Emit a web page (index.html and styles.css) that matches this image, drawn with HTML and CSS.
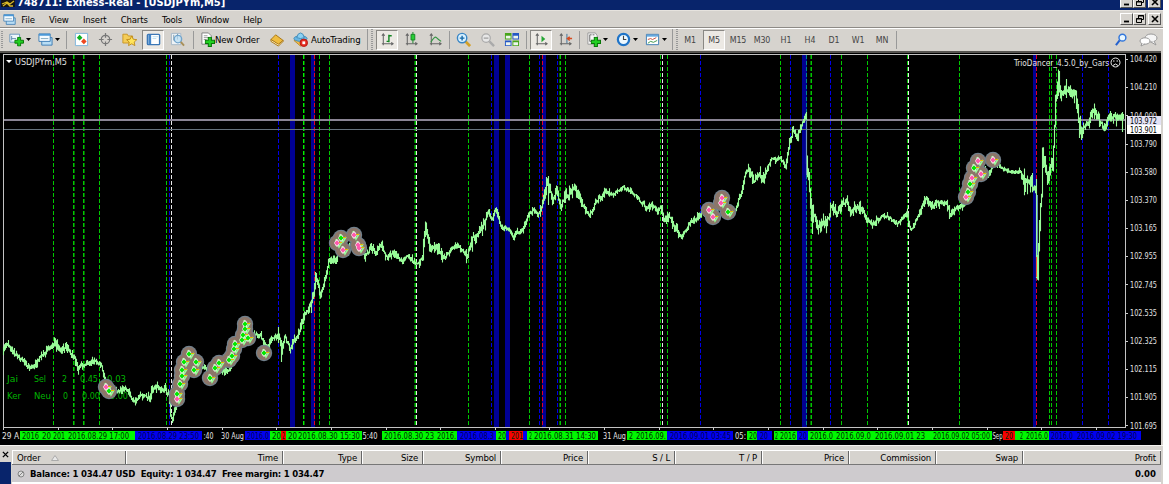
FILE: index.html
```html
<!DOCTYPE html>
<html lang="en">
<head>
<meta charset="utf-8">
<title>Trading terminal</title>
<link rel="stylesheet" href="styles.css">
</head>
<body>
<svg class="defs" width="0" height="0">
  <symbol id="arrow" viewBox="0 0 5 3"><path d="M0 0h5L2.500 3z" fill="#000"/></symbol>
  <symbol id="plus" viewBox="0 0 10 10"><path d="M3.500 .5h3v3h3v3h-3v3h-3v-3h-3v-3h3z" fill="#22d022" stroke="#087808"/></symbol>
  <symbol id="newchart" viewBox="0 0 17 16"><path d="M1 2h11v9H1z" fill="#eef6fb" stroke="#6090b8"/><path d="M3 4v5M3 7h5" stroke="#5585aa" fill="none"/><use href="#plus" x="6" y="5" width="11" height="11"/></symbol>
  <symbol id="profiles" viewBox="0 0 16 16"><path d="M4 6h11v8H4z" fill="#b9ddf4" stroke="#3c7cb4"/><path d="M1 2h12v8H1z" fill="#f4fbff" stroke="#3c7cb4"/><path d="M1 3h12" stroke="#4a98d8" stroke-width="2"/><path d="M3 7h8" stroke="#80a8c0"/></symbol>
  <symbol id="market" viewBox="0 0 16 16"><path d="M1.500 1.500h13v13h-13z" fill="#fff" stroke="#7cb4dc"/><path d="M6 3l3 3-3 3-3-3z" fill="#10b020"/><path d="M10.500 7l3 3-3 3-3-3z" fill="#ee4820"/></symbol>
  <symbol id="cross" viewBox="0 0 16 16"><circle cx="8" cy="8" r="4.500" fill="none" stroke="#777" stroke-width="1.300"/><path d="M8 1v5M8 10v5M1 8h5M10 8h5" stroke="#777" stroke-width="1.300"/></symbol>
  <symbol id="favorites" viewBox="0 0 17 16"><path d="M1 2h5l1 2h5v8H1z" fill="#f4cd58" stroke="#c79220"/><path d="M11 4l1.800 3.700 4 .5-3 2.700.8 4-3.600-2-3.600 2 .8-4-3-2.700 4-.5z" fill="#ffe45a" stroke="#bd8718"/></symbol>
  <symbol id="panel" viewBox="0 0 16 16"><rect x="1.500" y="2.500" width="13" height="11" rx="1" fill="#fff" stroke="#3d78b6" stroke-width="1.500"/><path d="M4 3v10" stroke="#4385c8" stroke-width="3"/><path d="M7 5h6M7 7h4" stroke="#b8dcef"/></symbol>
  <symbol id="tester" viewBox="0 0 16 16"><path d="M1.500 1.500h10v12h-10z" fill="#eef3f6" stroke="#a5b8c8"/><path d="M4 3v6M8 2v6" stroke="#8099a8"/><circle cx="8.500" cy="7.500" r="4" fill="#b9ddf4" fill-opacity=".7" stroke="#70a4cc" stroke-width="1.300"/><path d="M11.500 10.500l3.500 4" stroke="#a88f58" stroke-width="2"/></symbol>
  <symbol id="neworder" viewBox="0 0 16 16"><path d="M2 1h7l3 3v9H2z" fill="#fff" stroke="#808080"/><path d="M4 4h4M4 6h6M4 8h3" stroke="#999"/><use href="#plus" x="5" y="5" width="11" height="11"/></symbol>
  <symbol id="book" viewBox="0 0 16 16"><path d="M1 8l5-5 8 6-5 5z" fill="#efbd40" stroke="#a87412"/><path d="M1 8v2l8 5 5-5V9l-5 4z" fill="#fff2c0" stroke="#a87412"/></symbol>
  <symbol id="auto" viewBox="0 0 16 16"><path d="M3 8l-2 1 7 6 6-5z" fill="#efbf47" stroke="#b88930"/><ellipse cx="8" cy="7" rx="7" ry="3" fill="#6bb8e4" stroke="#428bb8"/><path d="M4 6Q5 1 8 1t4 5Q8 8 4 6" fill="#8bd0f2" stroke="#428bb8"/><circle cx="11.500" cy="11.500" r="4" fill="#e52b20" stroke="#b71610"/><path d="M10 10h3v3h-3z" fill="#fff"/></symbol>
  <symbol id="axes" viewBox="0 0 16 16"><path d="M3.500 2v12M2 12.500h12M2 4l1.500-2L5 4M12 11l2 1.500-2 1.500" fill="none" stroke="#666" stroke-width="1.100"/></symbol>
  <symbol id="bars" viewBox="0 0 16 16"><use href="#axes"/><path d="M9.500 3v8M9.500 4h3M7 10h2.500" stroke="#138522" stroke-width="1.500"/></symbol>
  <symbol id="candles" viewBox="0 0 16 16"><use href="#axes"/><path d="M9.500 0v12" stroke="#138522"/><path d="M7.500 2.500h4v6h-4z" fill="#28cf36" stroke="#138522"/></symbol>
  <symbol id="line" viewBox="0 0 16 16"><use href="#axes"/><path d="M3 11Q7 4 9 6t5 4" fill="none" stroke="#369544" stroke-width="1.200"/></symbol>
  <symbol id="zoomin" viewBox="0 0 16 16"><path d="M10 10l5 5" stroke="#d4a028" stroke-width="3"/><circle cx="6.500" cy="6.500" r="5" fill="#d9f1ff" stroke="#3885c5" stroke-width="1.500"/><path d="M4 6.500h5M6.500 4v5" stroke="#1769a9" stroke-width="1.500"/></symbol>
  <symbol id="zoomout" viewBox="0 0 16 16"><path d="M10 10l5 5" stroke="#aaa" stroke-width="2.500"/><circle cx="6.500" cy="6.500" r="4.500" fill="#e7e7e7" stroke="#aaa" stroke-width="1.300"/><path d="M4 6.500h5" stroke="#888"/></symbol>
  <symbol id="tile" viewBox="0 0 16 16"><path d="M1 1h7v7H1zM9 9h7v6H9z" fill="#48a51b"/><path d="M9 1h7v7H9zM1 9h7v6H1z" fill="#2457c5"/><path d="M2 4h5v3H2zM10 4h5v3h-5zM2 11h5v3H2zM10 11h5v3h-5z" fill="#edf5ed"/></symbol>
  <symbol id="scroll" viewBox="0 0 16 16"><use href="#axes"/><path d="M8 4v7l4-3.500z" fill="#26a634"/></symbol>
  <symbol id="shift" viewBox="0 0 16 16"><use href="#axes"/><path d="M9.500 2v10" stroke="#3c7197"/><path d="M15 7h-5M12.500 5L10 7l2.500 2" stroke="#d54c22" fill="none" stroke-width="1.500"/></symbol>
  <symbol id="indicators" viewBox="0 0 16 16"><path d="M2 1h8l2 3v9H2z" fill="#f8f8f8" stroke="#999"/><path d="M6 3H4v7h2M7 3h2" stroke="#666" fill="none"/><use href="#plus" x="5" y="5" width="11" height="11"/></symbol>
  <symbol id="clock" viewBox="0 0 16 16"><circle cx="8" cy="8" r="6" fill="#eef9ff" stroke="#1f74c8" stroke-width="2.400"/><path d="M8 4v4h3" fill="none" stroke="#444" stroke-width="1.200"/></symbol>
  <symbol id="template" viewBox="0 0 16 16"><path d="M1.500 2.500h13v11h-13z" fill="#fff" stroke="#3c7cb4"/><path d="M2 4h12" stroke="#66a9df" stroke-width="2"/><path d="M3 8l3-1 2 1 4-2" fill="none" stroke="#c54c38"/><path d="M3 12l3-2 3 1 4-2" fill="none" stroke="#3a9548"/></symbol>
  <symbol id="search" viewBox="0 0 14 14"><circle cx="8" cy="5" r="3.700" fill="#e9f7ff" stroke="#3377db" stroke-width="1.600"/><path d="M5 8l-4 5" stroke="#2461cf" stroke-width="2.200"/></symbol>
  <symbol id="chat" viewBox="0 0 19 14"><ellipse cx="12" cy="5" rx="6" ry="4" fill="#f5f5f5" stroke="#999"/><path d="M15 8l2 4-5-3" fill="#f5f5f5" stroke="#999"/><ellipse cx="6" cy="8" rx="5" ry="3.200" fill="#fff" stroke="#999"/><path d="M3 10l-1 3 4-2" fill="#fff" stroke="#999"/></symbol>
  <symbol id="restore" viewBox="0 0 8 8"><path d="M2.500 3V.5h5v4H6M2 1h6" fill="none" stroke="#000"/><path d="M.5 3.500h5v4h-5zM0 4h6" fill="none" stroke="#000"/></symbol>
  <symbol id="close" viewBox="0 0 8 8"><path d="M1 1l6 6M7 1L1 7" stroke="#000" stroke-width="1.600"/></symbol>
  <symbol id="min" viewBox="0 0 8 8"><path d="M1 6.500h5" stroke="#000" stroke-width="1.800"/></symbol>
</svg>
<div class="window">
  <header class="title">
    <svg class="logo" width="14" height="9" viewBox="0 0 14 9"><path d="M0 0h14v7H0z" fill="#151515"/><path d="M1 4l5-2 3 2 4-3M2 6l4-3 3 3 3 0" fill="none" stroke="#d8b928" stroke-width="1.300"/></svg>
    <span class="title-text">748711: Exness-Real - [USDJPYm,M5]</span>
    <span class="controls"><i><svg><use href="#min"/></svg></i><i><svg><use href="#restore"/></svg></i><i><svg><use href="#close"/></svg></i></span>
  </header>
  <nav class="menu">
    <svg class="menu-icon" viewBox="0 0 16 16"><use href="#profiles"/></svg>
    <span>File</span><span>View</span><span>Insert</span><span>Charts</span><span>Tools</span><span>Window</span><span>Help</span>
    <div class="controls"><i><svg><use href="#min"/></svg></i><i><svg><use href="#restore"/></svg></i><i><svg><use href="#close"/></svg></i></div>
  </nav>
  <div class="toolbar">
    <b class="grip first"></b>
    <div class="tool drop"><svg class="icon"><use href="#newchart"/></svg><svg class="arrow"><use href="#arrow"/></svg></div>
    <div class="tool drop profile"><svg class="icon"><use href="#profiles"/></svg><svg class="arrow"><use href="#arrow"/></svg></div>
    <b class="sep w6"></b>
    <div class="tool"><svg class="icon"><use href="#market"/></svg></div><div class="tool"><svg class="icon"><use href="#cross"/></svg></div><div class="tool"><svg class="icon"><use href="#favorites"/></svg></div><div class="tool on"><svg class="icon"><use href="#panel"/></svg></div><div class="tool"><svg class="icon"><use href="#tester"/></svg></div>
    <b class="sep w8"></b>
    <div class="tool labeled order"><svg class="icon"><use href="#neworder"/></svg><span>New Order</span></div>
    <div class="tool"><svg class="icon"><use href="#book"/></svg></div>
    <div class="tool labeled trading"><svg class="icon"><use href="#auto"/></svg><span>AutoTrading</span></div>
    <b class="grip ruled"></b>
    <div class="tool on"><svg class="icon"><use href="#bars"/></svg></div><div class="tool"><svg class="icon"><use href="#candles"/></svg></div><div class="tool"><svg class="icon"><use href="#line"/></svg></div>
    <b class="sep w4"></b>
    <div class="tool"><svg class="icon"><use href="#zoomin"/></svg></div><div class="tool"><svg class="icon"><use href="#zoomout"/></svg></div><div class="tool"><svg class="icon"><use href="#tile"/></svg></div>
    <b class="sep w6"></b>
    <div class="tool on"><svg class="icon"><use href="#scroll"/></svg></div><div class="tool"><svg class="icon"><use href="#shift"/></svg></div>
    <b class="sep w5"></b>
    <div class="tool drop"><svg class="icon"><use href="#indicators"/></svg><svg class="arrow"><use href="#arrow"/></svg></div>
    <div class="tool drop"><svg class="icon"><use href="#clock"/></svg><svg class="arrow"><use href="#arrow"/></svg></div>
    <div class="tool drop profile"><svg class="icon"><use href="#template"/></svg><svg class="arrow"><use href="#arrow"/></svg></div>
    <b class="grip ruled short"></b>
    <div class="tool tf">M1</div><div class="tool tf on">M5</div><div class="tool tf">M15</div><div class="tool tf">M30</div><div class="tool tf">H1</div><div class="tool tf">H4</div><div class="tool tf">D1</div><div class="tool tf">W1</div><div class="tool tf">MN</div>
    <b class="sep w4"></b>
    <div class="right-tools"><svg width="13" height="13"><use href="#search"/></svg><svg width="19" height="14"><use href="#chat"/></svg></div>
  </div>
  <main class="chart-pane"><svg id="chart" width="1161" height="394" viewBox="0 51 1161 394"></svg></main>
  <section class="terminal">
    <aside><span class="x"><svg width="7" height="7"><use href="#close"/></svg></span></aside>
    <div class="grid">
      <div class="heads"><div class="c0">Order <svg width="8" height="6" viewBox="0 0 8 6"><path d="M.5 5.500h7L4 .5z" fill="#e8e8e8" stroke="#aaa"/></svg></div><div class="c1">Time</div><div class="c2">Type</div><div class="c3">Size</div><div class="c4">Symbol</div><div>Price</div><div>S / L</div><div>T / P</div><div>Price</div><div>Commission</div><div>Swap</div><div class="last">Profit</div></div>
      <div class="balance"><svg width="8" height="8" viewBox="0 0 8 8"><circle cx="4" cy="4" r="3" fill="#ddd" stroke="#858585"/><path d="M2 6l4-4" stroke="#858585"/></svg><span class="sum">Balance: 1 034.47 USD&nbsp; Equity: 1 034.47&nbsp; Free margin: 1 034.47</span><span class="profit">0.00</span></div>
    </div>
  </section>
</div>
<script src="chart.js"></script>
</body>
</html>
```
FILE: styles.css
```css
* { box-sizing: border-box; }
body { margin: 0; background: #fff; font-family: "DejaVu Sans Condensed", "DejaVu Sans", sans-serif; font-stretch: condensed; font-size: 9.5px; color: #000; overflow: hidden; }
.defs { position: absolute; }
.window { width: 1163px; height: 484px; display: flex; flex-direction: column; background: #d6d3ce; overflow: hidden; }
.title { height: 11px; background: #08246b; border-bottom: 1px solid #e6e3de; display: flex; align-items: flex-start; color: #fff; overflow: hidden; flex: none; }
.logo { margin-left: 1px; flex: none; }
.title-text { margin: -4px 0 0 2px; font-weight: bold; font-size: 11px; line-height: 13px; letter-spacing: 0; white-space: nowrap; }
.controls { margin-left: auto; display: flex; padding-right: 2px; }
.controls i { width: 13px; height: 12px; background: #d6d3ce; border: 1px solid #fff; border-right-color: #555; border-bottom-color: #555; display: flex; justify-content: center; align-items: center; }
.controls i:last-child { margin-left: 2px; }
.controls svg { width: 8px; height: 8px; }
.title .controls { margin-top: -4px; }
.menu { height: 17px; border-bottom: 1px solid #8d8a86; display: flex; align-items: center; gap: 14.2px; flex: none; padding-left: 3px; }
.menu > span { letter-spacing: -.15px; }
.menu-icon { width: 13px; height: 13px; margin-right: -9px; }
.toolbar { height: 23px; border-top: 1px solid #fff; display: flex; align-items: center; flex: none; padding-bottom: 1px; }
.tool { width: 24px; height: 20px; display: flex; align-items: center; justify-content: center; flex: none; }
.icon { width: 15px; height: 15px; flex: none; }
.on { background: #ece9e4; background-clip: padding-box; border: 1px solid #8a8884; border-right-color: #fff; border-bottom-color: #fff; width: 22px; margin: 0 1px; }
.drop { width: 30px; justify-content: flex-start; padding-left: 4px; gap: 2px; }
.profile { width: 28px; padding-left: 3px; }
.arrow { width: 5px; height: 3px; }
.labeled { justify-content: flex-start; padding-left: 3px; gap: 0; }
.labeled span { white-space: nowrap; letter-spacing: -.15px; }
.order { width: 68px; }
.trading { width: 76px; padding-left: 4px; gap: 3px; }
.tf { color: #444; font-size: 8.8px; letter-spacing: -.1px; }
.sep { height: 18px; flex: none; background: linear-gradient(#999,#999) center / 1px 100% no-repeat; }
.w4 { width: 4px; } .w5 { width: 5px; } .w6 { width: 6px; } .w8 { width: 8px; }
.grip { width: 5px; height: 17px; flex: none; background: repeating-linear-gradient(#999 0 1px, #d6d3ce 1px 2px) 1px 0 / 2px 100% no-repeat; }
.ruled { height: 21px; border-left: 1px solid #999; margin-left: 2px; width: 8px; background-position: 3px 0; }
.short { width: 6px; }
.right-tools { margin-left: auto; display: flex; gap: 11px; align-items: center; padding-right: 5px; }
.chart-pane { height: 394px; background: #000; flex: none; width: 1161px; }
#chart { display: block; }
#chart text { font-family: "DejaVu Sans Condensed", "DejaVu Sans", sans-serif; font-stretch: condensed; font-size: 8.5px; }
.terminal { height: 39px; border-top: 1px solid #f5f3ef; display: flex; }
.terminal aside { width: 11px; background: #08246b; flex: none; }
.x { height: 16px; background: #d6d3ce; display: flex; align-items: center; justify-content: center; }
.grid { flex: 1; padding: 4px 2px 0 1px; background: #d6d3ce; }
.heads { display: flex; height: 15px; border-top: 1px solid #fff; border-bottom: 1px solid #777; }
.heads div { width: 87px; flex: none; border-right: 1px solid #666; box-shadow: inset 1px 0 #fff; text-align: right; padding-right: 4px; line-height: 14px; white-space: nowrap; letter-spacing: -.15px; }
.heads .c0 { width: 114px; text-align: left; padding-left: 5px; }
.c0 svg { margin-left: 8px; }
.heads .c1 { width: 157px; }
.heads .c2 { width: 79px; }
.heads .c3 { width: 61px; }
.heads .c4 { width: 78px; }
.heads .last { flex: 1; }
.balance { height: 17px; background: #cecbce; display: flex; align-items: center; font-weight: bold; padding: 0 5px; box-shadow: 0 2px #fff; }
.sum { margin-left: 5px; white-space: nowrap; letter-spacing: -.2px; }
.profit { margin-left: auto; }
```
FILE: chart.js
```js
const chart = document.getElementById('chart');
const NS = 'http://www.w3.org/2000/svg';
function add(tag, attrs, text) {
  const el = document.createElementNS(NS, tag);
  for (const key in attrs) el.setAttribute(key, attrs[key]);
  if (text) el.textContent = text;
  chart.appendChild(el);
  return el;
}
function rect(x, y, width, height, fill) {
  return add('rect', { x, y, width, height, fill, 'shape-rendering': 'crispEdges' });
}
function label(text, x, y, fill, width) {
  const attrs = { x, y, fill };
  if (width) { attrs.textLength = width; attrs.lengthAdjust = 'spacingAndGlyphs'; }
  return add('text', attrs, text);
}

// Window and plot frame
rect(0, 51, 1161, 2, '#55534f');
rect(3, 54, 1123, 1, '#c4c4c4');
rect(3, 54, 1, 374, '#c4c4c4');
rect(1125, 54, 1, 374, '#c4c4c4');
rect(3, 427, 1123, 1, '#c4c4c4');

// Session bands
[[290, 5], [311, 4], [494, 5], [505, 5], [542, 4], [802, 5], [1033, 3]].forEach(([x, w]) => rect(x, 55, w, 372, '#000094'));

// Event lines
function dashes(xs, color) {
  xs.forEach(x => {
    for (let y = 55; y < 427; y += 6) rect(x, y, 1, Math.min(4, 427 - y), color);
  });
}
dashes([53, 73, 83, 99, 166, 319, 329, 415, 468, 529, 560, 565, 660, 667, 780, 811, 841, 867, 907, 959, 1049, 1051, 1056], '#00c800');
dashes([74, 84, 304, 414, 559, 810], '#006800');
dashes([303], '#00f000');
dashes([169, 278, 491, 539, 557, 700, 790, 830, 1082, 1108], '#0000e6');
dashes([171, 416, 662, 908], '#e8e8e8');
dashes([314, 542, 1036], '#e00028');
dashes([806], '#008888');

// Bid and ask levels
rect(4, 119, 1121, 2, '#8a8494');
rect(4, 129, 1121, 1, '#66727d');

const labels = [['Jai', 7, 382, 11], ['Sel', 34, 382, 12], ['2', 62, 382, 5], ['0.45', 80, 382, 18], ['0.03', 107, 382, 19], ['Ker', 7, 399, 14], ['Neu', 34, 399, 17], ['0', 63, 399, 5], ['0.00', 82, 399, 18], ['0.00', 110, 399, 18]];
labels.forEach(([t, x, y, w]) => label(t, x, y, '#00b400', w));

const pivots = [3,351,5,343,10,348,15,356,20,358,27,367,33,367,40,356,47,350,52,346,60,349,67,347,73,357,77,367,85,365,95,361,101,366,105,385,110,391,118,390,125,388,133,401,140,396,148,398,155,387,163,388,168,396,170,414,172,418,175,408,178,395,182,375,188,355,195,362,205,368,215,365,222,370,228,370,235,355,242,340,248,336,254,335,260,336,265,348,270,341,275,337,278,334,281,350,284,336,288,345,290,350,293,340,298,334,303,316,308,308,313,296,315,273,320,296,325,277,329,258,335,262,340,243,345,250,352,243,360,247,365,257,370,247,376,252,381,243,385,257,393,253,402,262,407,256,417,265,422,255,425,223,430,253,433,245,437,250,442,258,453,247,460,248,466,257,472,240,480,230,488,213,492,220,495,208,501,228,508,229,512,237,522,230,527,217,533,210,538,215,543,200,547,183,552,200,556,190,559,207,565,197,570,190,575,188,583,207,589,215,595,203,605,192,613,195,622,187,635,195,645,208,652,205,657,212,660,207,664,222,668,215,673,227,681,237,688,225,700,215,707,211,713,215,722,200,727,212,733,215,742,188,746,168,750,172,753,180,758,173,762,180,770,160,780,158,785,167,789,143,792,132,797,137,802,122,805,118,806,160,808,173,811,214,815,217,817,230,822,222,827,222,831,207,837,213,842,203,846,200,850,213,855,208,862,210,867,223,873,223,881,217,888,218,898,223,906,213,910,230,917,218,924,198,932,207,937,202,945,203,950,215,957,208,965,203,972,187,978,162,987,175,995,160,1000,168,1010,172,1020,172,1025,183,1032,183,1035,188,1037,277,1038,243,1041,193,1042,150,1045,167,1047,180,1050,163,1052,167,1055,103,1058,77,1060,95,1067,90,1075,93,1077,113,1081,132,1088,122,1093,110,1103,128,1108,117,1117,118,1123,116];
// Extra volatility ranges: start, end, half height
const wild = [[50, 80, 7], [148, 166, 7], [290, 316, 7], [340, 366, 9], [422, 445, 8], [470, 490, 9], [543, 580, 10], [610, 640, 3], [660, 682, 7], [743, 765, 8], [806, 838, 12], [840, 868, 7], [920, 955, 7], [1000, 1019, 3], [1020, 1054, 14], [1055, 1082, 9], [1083, 1122, 7]];
let seed = 41;
function random() { seed = (seed * 16807) % 2147483647; return seed / 2147483647; }
let path = '';
let k = 0;
function priceAt(x) {
  while (k < pivots.length - 4 && x > pivots[k + 2]) k += 2;
  const t = (x - pivots[k]) / (pivots[k + 2] - pivots[k]);
  return pivots[k + 1] + Math.min(1, t) * (pivots[k + 3] - pivots[k + 1]);
}
let last = 351;
for (let x = 3; x <= 1123; x++) {
  const zone = wild.find(z => x >= z[0] && x <= z[1]);
  const size = zone ? zone[2] : 5;
  const y = priceAt(x) + (random() - .5) * size * .7;
  const top = Math.min(last, y) - random() * random() * size - .6;
  const bottom = Math.max(last, y) + random() * random() * size + .6;
  path += `M${x + .5} ${top.toFixed(1)}V${bottom.toFixed(1)}`;
  last = y;
}
path += 'M278.5 327V343M281.500 340V362M548.500 180V205M812.500 205V234M1036.500 190V278M1058.500 73V96M1066.500 79V98M1122.500 112V132M1079.500 120V138';
add('path', { d: path, stroke: '#98fb98', 'stroke-width': 1.1, fill: 'none' });
[806, 1037].forEach((x, i) => rect(x, i ? 195 : 120, 1, i ? 60 : 55, '#6a92bb'));
rect(1036, 257, 1, 20, '#ff5030');

// Trade markers: x, y, direction
const trades = [[106,387,'s'],[109,391],[177,394],[177,399,'s'],[180,384],[182,376],[182,370],[184,362],[189,354],[196,362],[194,370],[210,378],[215,368],[219,363],[229,360],[232,356],[234,349],[235,344],[242,340],[243,335],[245,329],[245,324],[248,338],[264,353],[337,243,'s'],[341,238],[343,250,'s'],[354,235,'s'],[358,245,'s'],[359,248,'s'],[709,210,'s'],[713,217,'s'],[722,198,'s'],[721,203,'s'],[728,212],[966,197,'s'],[968,192],[970,184],[972,178,'s'],[974,168],[978,161,'s'],[981,174,'s'],[993,160,'s']];
trades.forEach(([x, y]) => add('circle', { cx: x, cy: y, r: 8.2, fill: '#71808c' }));
trades.forEach(([x, y]) => add('circle', { cx: x, cy: y, r: 7, fill: '#8c7669' }));
trades.forEach(([x, y]) => add('path', { d: `M${x - 1} ${y - 4}L${x + 2} ${y + 4}L${x + 5} ${y - 1}`, stroke: '#98fb98', 'stroke-width': 1.6, fill: 'none' }));
trades.forEach(([x, y]) => add('path', { d: `M${x} ${y - 4}l1.500 1.500 1.500 2.500-1.500 2.500-1.500 1.500-1.500-1.500-1.500-2.500 1.500-2.500z`, fill: '#f5f5ee' }));
trades.forEach(([x, y, side]) => {
  add('path', { d: `M${x} ${y - 2.8}l2.600 2.800-2.600 2.800-2.600-2.800z`, fill: side ? '#ff58ad' : '#00e800' });
  rect(x + 2, y - 1, 3, 1, '#e6bc00');
});

// Price scale
[104.420, 104.210, 104.000, 103.790, 103.580, 103.370, 103.165, 102.955, 102.745, 102.535, 102.325, 102.115, 101.905, 101.695].forEach((p, i) => {
  const y = 59 + i * 28.17;
  rect(1126, Math.round(y), 2, 1, '#ccc');
  label(p.toFixed(3), 1130, y + 3.3, '#e0e0e0', 27);
});
rect(1127, 116, 34, 18, '#fff');
rect(1127, 116, 34, 9, '#e4e3f5');
label('103.972', 1130, 123.5, '#000', 27);
label('103.901', 1130, 132.7, '#000', 27);

label('USDJPYm,M5', 15, 64.5, '#e0e0e0', 52);
add('path', { d: 'M6 60h6l-3 3z', fill: '#fff' });
label('TrioDancer_4.5.0_by_Gars', 1014, 65.5, '#e4e4e4', 95);
add('circle', { cx: 1115.5, cy: 62.500, r: 4.500, fill: 'none', stroke: '#eee' });
add('path', { d: 'M1113 61h1.500M1116.500 61h1.500M1113 65.500q2.500-3 5 0', fill: 'none', stroke: '#eee' });

// Time scale
for (let x = 3; x < 1125; x += 54.65) rect(Math.round(x), 428, 1, 2, '#ccc');
const G = '#00f800', B = '#0000f0', R = '#f80000';
[[20,115,G],[135,67,B],[245,25,B],[270,11,G],[281,5,R],[286,76,G],[382,75,G],[457,39,B],[496,10,G],[506,3,B],[509,14,R],[523,4,B],[527,71,G],[627,40,G],[667,66,B],[747,10,G],[757,15,B],[774,23,G],[797,11,B],[808,184,G],[1003,12,R],[1015,34,G],[1049,92,B]].forEach(([x, w, c]) => rect(x, 431, w, 9, c));
[['29 A',2,17,1],['2016',22,17],['20',42,9],['201',53,12],['2016.08.29 17:00',68,61],['2016.08.29 23:50',138,61,2],[':40',203.5,10,1],['30 Aug',221,23,1],['2016.0',247,22,2],['20',272,9],['2',282,3],['20',288,9],['2016.08.30 15:30',298,62],['5:40',362.5,15,1],['2016.08.30 23',384,50],['2016.',437,19],['2016.08.3',460,34,2],['20',498,8],['201',511,12],['2',529,3],['2016.08.31 14:30',534,62],['31 Aug',603,23,1],['2',629,4],['2016.09.',636,30],['2016.09.01 03:45',670,61,2],['05:',735,11,1],['20',749,8],['20',760,8,2],['2',775,3],['2016',780,16],['20',799,8,2],['2016.0',810,23],['2016.09.0',836,35],['2016.09.01 23',875,50],['2016.09.02 05:00',933,57],['Sep',992.5,10,1],['20',1005,8],['2',1020,3],['2016.0',1026,22],['2016.0',1051,22,2],['2016.09.02 19:30',1077,60,2]].forEach(([t, x, w, kind]) => label(t, x, 438.7, kind === 1 ? '#e4e4e4' : kind === 2 ? '#000050' : '#002800', w));
```
